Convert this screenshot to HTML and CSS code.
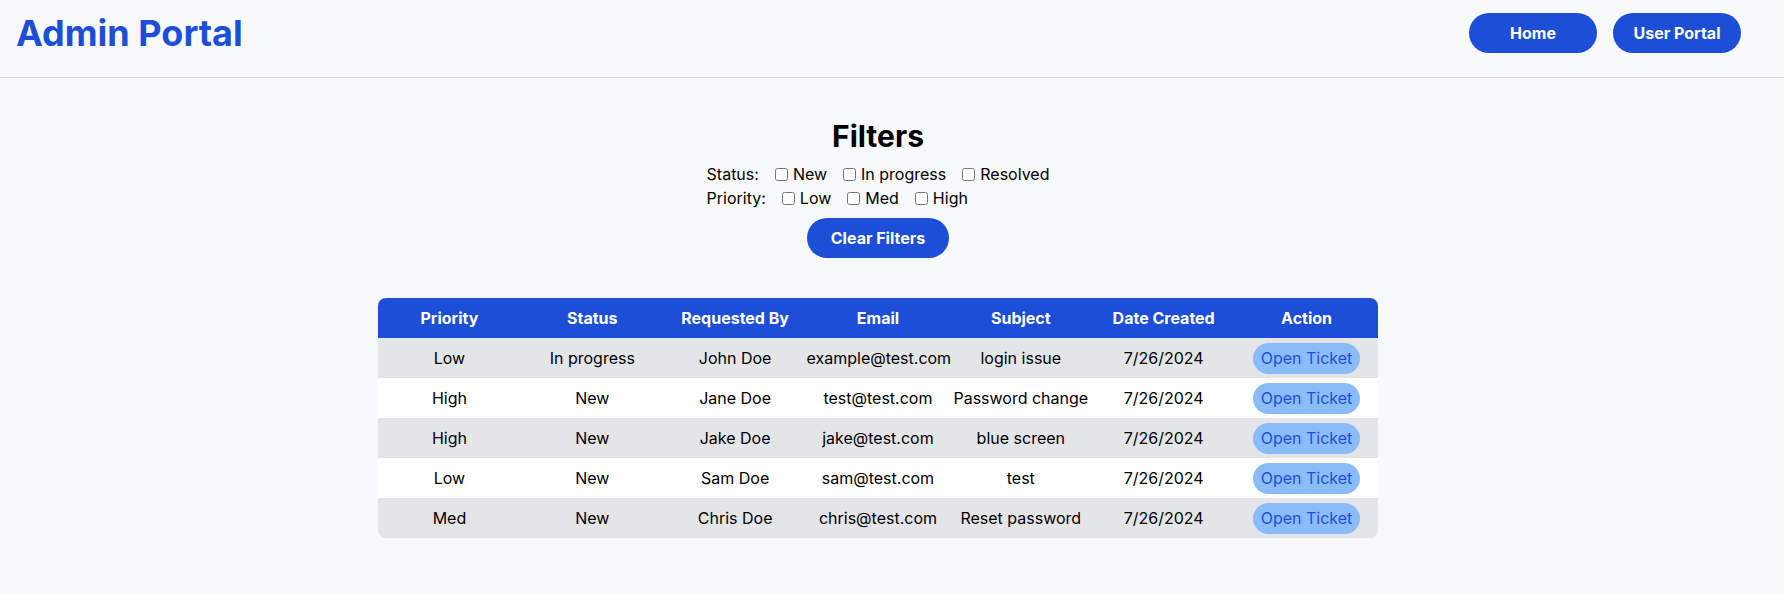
FILE: index.html
```html
<!DOCTYPE html>
<html lang="en">
<head>
<meta charset="utf-8">
<title>Admin Portal</title>
<link rel="stylesheet" href="styles.css">
</head>
<body>
<header class="topbar">
  <h1 class="brand">Admin Portal</h1>
  <nav class="nav">
    <button class="btn nav-btn">Home</button>
    <button class="btn nav-btn">User Portal</button>
  </nav>
</header>
<main class="main">
  <section class="filters">
    <h2 class="filters-title">Filters</h2>
    <div class="filter-rows">
      <div class="filter-row">
        <span class="filter-label">Status:</span>
        <label class="opt"><input type="checkbox">New</label>
        <label class="opt"><input type="checkbox">In progress</label>
        <label class="opt"><input type="checkbox">Resolved</label>
      </div>
      <div class="filter-row">
        <span class="filter-label">Priority:</span>
        <label class="opt"><input type="checkbox">Low</label>
        <label class="opt"><input type="checkbox">Med</label>
        <label class="opt"><input type="checkbox">High</label>
      </div>
    </div>
    <button class="btn clear-btn">Clear Filters</button>
  </section>
  <div class="table-wrap">
    <table class="tickets">
      <thead>
        <tr>
          <th>Priority</th><th>Status</th><th>Requested By</th><th>Email</th><th>Subject</th><th>Date Created</th><th>Action</th>
        </tr>
      </thead>
      <tbody>
        <tr><td>Low</td><td>In progress</td><td>John Doe</td><td>example@test.com</td><td>login issue</td><td>7/26/2024</td><td><button class="open-btn">Open Ticket</button></td></tr>
        <tr><td>High</td><td>New</td><td>Jane Doe</td><td>test@test.com</td><td>Password change</td><td>7/26/2024</td><td><button class="open-btn">Open Ticket</button></td></tr>
        <tr><td>High</td><td>New</td><td>Jake Doe</td><td>jake@test.com</td><td>blue screen</td><td>7/26/2024</td><td><button class="open-btn">Open Ticket</button></td></tr>
        <tr><td>Low</td><td>New</td><td>Sam Doe</td><td>sam@test.com</td><td>test</td><td>7/26/2024</td><td><button class="open-btn">Open Ticket</button></td></tr>
        <tr><td>Med</td><td>New</td><td>Chris Doe</td><td>chris@test.com</td><td>Reset password</td><td>7/26/2024</td><td><button class="open-btn">Open Ticket</button></td></tr>
      </tbody>
    </table>
  </div>
</main>
</body>
</html>
```

FILE: styles.css
```css
* { box-sizing: border-box; }
html, body {
  margin: 0;
  padding: 0;
  background: #f8f9fb;
  font-family: Inter, "Noto Sans", sans-serif;
  font-size: 16px;
  line-height: 24px;
  color: #000;
}
.topbar {
  display: flex;
  justify-content: space-between;
  align-items: center;
  padding: 13px 43px 24px 16px;
  border-bottom: 1px solid #d4d4d8;
}
.brand {
  margin: 0;
  font-size: 36px;
  line-height: 40px;
  font-weight: 700;
  color: #1d4ed8;
}
.nav {
  display: flex;
  gap: 16px;
}
.btn {
  border: 0;
  background: #1d4ed8;
  color: #fff;
  font-family: inherit;
  font-size: 16px;
  font-weight: 700;
  line-height: 24px;
  height: 40px;
  border-radius: 9999px;
  cursor: pointer;
}
.nav-btn { width: 128px; }
.main {
  padding: 40px 28px 40px 0;
  display: flex;
  flex-direction: column;
  align-items: center;
}
.filters {
  display: flex;
  flex-direction: column;
  align-items: center;
}
.filters-title {
  margin: 0 0 8px;
  font-size: 30px;
  line-height: 36px;
  font-weight: 700;
}
.filter-rows {
  display: flex;
  flex-direction: column;
  align-items: flex-start;
}
.filter-row {
  display: flex;
  align-items: center;
  height: 24px;
}
.opt {
  display: flex;
  align-items: center;
  margin-left: 12px;
}
.opt input {
  width: 13px;
  height: 13px;
  margin: 0 5px 0 4px;
}
.clear-btn {
  margin-top: 8px;
  padding: 0 24px;
}
.table-wrap {
  margin-top: 40px;
  width: 1000px;
  border-radius: 8px;
  overflow: hidden;
}
.tickets {
  width: 100%;
  border-collapse: collapse;
  table-layout: fixed;
}
.tickets th {
  background: #1d4ed8;
  color: #fff;
  font-weight: 700;
  height: 40px;
  padding: 0;
  text-align: center;
}
.tickets td {
  height: 40px;
  padding: 0;
  text-align: center;
}
.tickets tbody tr:nth-child(odd) td { background: #e4e5e9; }
.tickets tbody tr:nth-child(even) td { background: #fff; }
.open-btn {
  border: 0;
  background: #8bbcfa;
  color: #1d4ed8;
  font-family: inherit;
  font-size: 16px;
  line-height: 23px;
  padding: 4px 8px;
  border-radius: 9999px;
  cursor: pointer;
  vertical-align: middle;
}
```
